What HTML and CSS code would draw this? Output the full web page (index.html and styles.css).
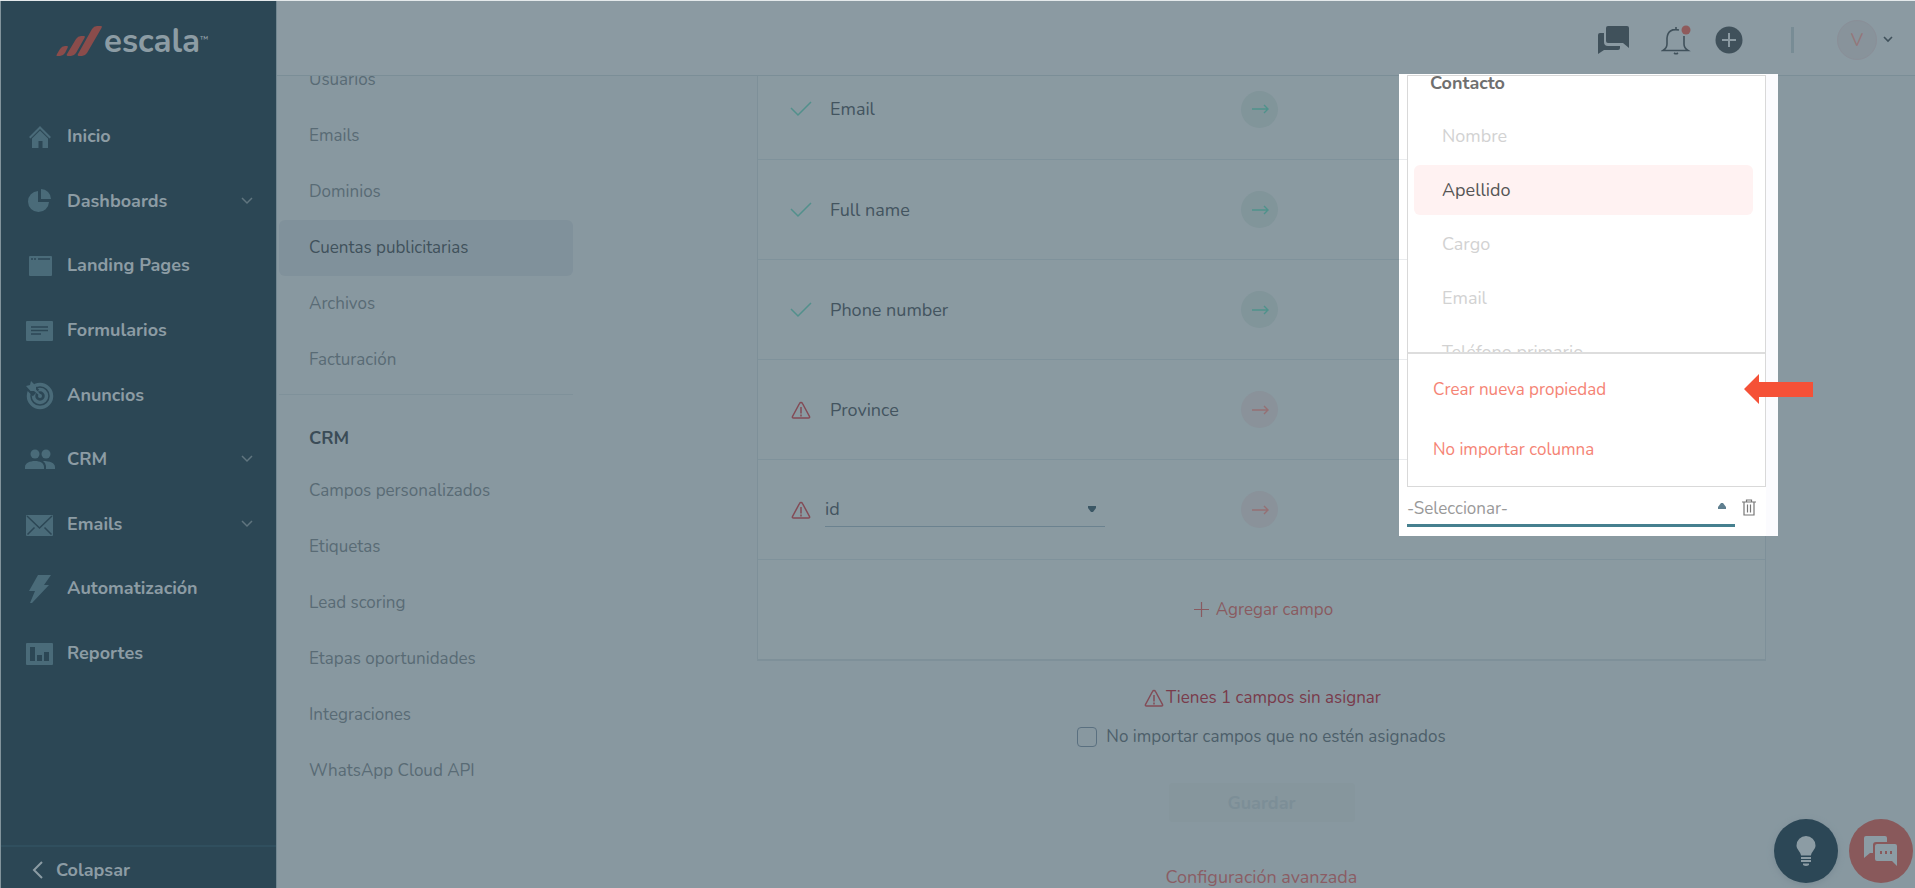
FILE: index.html
```html
<!DOCTYPE html>
<html lang="es">
<head>
<meta charset="utf-8">
<title>Escala – Cuentas publicitarias</title>
<link rel="stylesheet" href="styles.css">
</head>
<body>
<div class="app">
  <aside class="sidebar">
    <a class="logo" href="#" aria-label="Escala">
      <svg class="logo-mark" width="46" height="30" viewBox="0 0 46 30"><path d="M1 30Q0 30 1 28L4 23q2-3 5-3h2q1.500 0 .5 2L9 27q-2 3-5 3zM12 30q-2 0-1-2L20 13q2-3 5-3h3q1.500 0 .5 2L20 27q-2 3-5 3zM23 30q-2 0-1-2L36 3q2-3 5-3h4q1.500 0 .5 2L31 27q-2 3-5 3z"/></svg>
      <span class="logo-word">escala</span><span class="logo-tm">™</span>
    </a>
    <nav class="menu">
      <a class="menu-item" href="#"><svg class="menu-icon" viewBox="0 0 30 30"><path d="M15 5l11 11-1.500 1.500L15 8 5.500 17.500 4 16zM15 9.500l8 8V27h-5.500v-7h-4v7H7v-9.500z"/></svg><span>Inicio</span></a>
      <a class="menu-item" href="#"><svg class="menu-icon" viewBox="0 0 30 30"><path d="M13 5v11h11A10.500 10.500 0 1 1 13 5z"/><path d="M16 3a10 10 0 0 1 10 10H16z"/></svg><span>Dashboards</span><svg class="menu-chevron" viewBox="0 0 12 8"><path d="M1 1l5 5 5-5"/></svg></a>
      <a class="menu-item" href="#"><svg class="menu-icon" viewBox="0 0 30 30"><rect x="4" y="6" width="23" height="20" rx="1"/><path class="cut" d="M6 9h2M9 9h2M13 9h12"/></svg><span>Landing Pages</span></a>
      <a class="menu-item" href="#"><svg class="menu-icon" viewBox="0 0 30 30"><rect x="1" y="6" width="27" height="20" rx="1"/><path class="cut" d="M6 12h17M6 15.500h17M6 19h10"/></svg><span>Formularios</span></a>
      <a class="menu-item" href="#"><svg class="menu-icon" viewBox="0 0 30 30"><circle class="ring" cx="15" cy="16" r="11.500"/><circle class="ring" cx="15" cy="16" r="6.500"/><circle cx="15" cy="16" r="2"/><path class="gap" d="M2 4l9 9"/><path d="M1 6l4-1 1-4 5 5v3.500l5 5.500-1 1-6-5H5.500z"/></svg><span>Anuncios</span></a>
      <a class="menu-item" href="#"><svg class="menu-icon" viewBox="0 0 30 30"><circle cx="10" cy="10" r="4.500"/><circle cx="21" cy="10" r="4.500"/><path d="M0 25v-2c0-4 5-6 10-6s9 2 9 6v2zM21 25v-3q0-3-3-5c7 0 12 2 12 6v2z"/></svg><span>CRM</span><svg class="menu-chevron" viewBox="0 0 12 8"><path d="M1 1l5 5 5-5"/></svg></a>
      <a class="menu-item" href="#"><svg class="menu-icon" viewBox="0 0 30 30"><rect x="1" y="6" width="27" height="21" rx="1"/><path class="cut" d="M2 7l12.500 12L27 7M2.500 25.500l7-7M26.500 25.500l-7-7"/></svg><span>Emails</span><svg class="menu-chevron" viewBox="0 0 12 8"><path d="M1 1l5 5 5-5"/></svg></a>
      <a class="menu-item" href="#"><svg class="menu-icon" viewBox="0 0 30 30"><path d="M13 2h13l-7 10h5L7 30H5l5-12H4z"/></svg><span>Automatización</span></a>
      <a class="menu-item" href="#"><svg class="menu-icon" viewBox="0 0 30 30"><rect x="1" y="5" width="27" height="22" rx="1"/><path class="bars" d="M5 9h5v14H5zM12 17h5v6h-5zM19 14h5v9h-5z"/></svg><span>Reportes</span></a>
    </nav>
    <button class="collapse" type="button"><svg viewBox="0 0 12 18" width="12" height="18"><path d="M10 1L2 9l8 8"/></svg>Colapsar</button>
  </aside>

  <div class="page">
    <header class="topbar">
      <button class="icon-btn" type="button" aria-label="Chat"><svg width="34" height="30" viewBox="0 0 34 30"><path d="M11 1h19q2 0 2 2v20l-6-5H11q-2 0-2-2V3q0-2 2-2zM7 8v9q0 4 4 4h12v2q0 2-2 2H7l-6 4V10q0-2 2-2z"/></svg></button>
      <button class="icon-btn bell" type="button" aria-label="Notificaciones"><svg width="30" height="30" viewBox="0 0 30 30"><path class="line" d="M15 2v3M18 5Q7 3 6 13v6q0 4-4 6.500h25q-4-2.500-4-6.500v-8"/><path class="line" d="M13 28q2 1.500 4 0"/><circle class="dot" cx="25" cy="5" r="4.500"/></svg></button>
      <button class="icon-btn add" type="button" aria-label="Agregar"><svg width="28" height="28" viewBox="0 0 28 28"><circle cx="14" cy="14" r="13.500"/><path class="plus" d="M14 7v14M7 14h14"/></svg></button>
      <span class="separator"></span>
      <button class="account" type="button"><span class="avatar">V</span><svg width="10" height="7" viewBox="0 0 10 7"><path d="M1 1l4 4 4-4"/></svg></button>
    </header>

    <div class="workspace">
      <div class="scroller">
        <nav class="settings">
          <div class="settings-group">
            <a href="#">Usuarios</a>
            <a href="#">Emails</a>
            <a href="#">Dominios</a>
            <a class="current" href="#">Cuentas publicitarias</a>
            <a href="#">Archivos</a>
            <a href="#">Facturación</a>
          </div>
          <div class="settings-group">
            <h2>CRM</h2>
            <a href="#">Campos personalizados</a>
            <a href="#">Etiquetas</a>
            <a href="#">Lead scoring</a>
            <a href="#">Etapas oportunidades</a>
            <a href="#">Integraciones</a>
            <a href="#">WhatsApp Cloud API</a>
          </div>
        </nav>

        <main class="content">
          <div class="card">
            <div class="row"><div class="field"><svg class="check" viewBox="0 0 24 20"><path d="M2 9l7 7L22 3"/></svg><span>Email</span></div><span class="arrow ok"><svg viewBox="0 0 18 10"><path d="M1 5h16M13 1l4 4-4 4"/></svg></span></div>
            <div class="row"><div class="field"><svg class="check" viewBox="0 0 24 20"><path d="M2 9l7 7L22 3"/></svg><span>Full name</span></div><span class="arrow ok"><svg viewBox="0 0 18 10"><path d="M1 5h16M13 1l4 4-4 4"/></svg></span></div>
            <div class="row"><div class="field"><svg class="check" viewBox="0 0 24 20"><path d="M2 9l7 7L22 3"/></svg><span>Phone number</span></div><span class="arrow ok"><svg viewBox="0 0 18 10"><path d="M1 5h16M13 1l4 4-4 4"/></svg></span></div>
            <div class="row"><div class="field"><svg class="warn" viewBox="0 0 24 20"><path d="M12 2.500q1 0 1.500 1l7 13q.5 1.500-1 1.500h-15q-1.500 0-1-1.500l7-13q.5-1 1.500-1zM12 7v6.500M12 14.500v2"/></svg><span>Province</span></div><span class="arrow bad"><svg viewBox="0 0 18 10"><path d="M1 5h16M13 1l4 4-4 4"/></svg></span></div>
            <div class="row"><div class="field"><svg class="warn" viewBox="0 0 24 20"><path d="M12 2.500q1 0 1.500 1l7 13q.5 1.500-1 1.500h-15q-1.500 0-1-1.500l7-13q.5-1 1.500-1zM12 7v6.500M12 14.500v2"/></svg><span class="picker"><select aria-label="Columna"><option>id</option></select><svg viewBox="0 0 10 8"><path d="M1 1h8v2L6 7H4L1 3z"/></svg></span></div><span class="arrow bad"><svg viewBox="0 0 18 10"><path d="M1 5h16M13 1l4 4-4 4"/></svg></span></div>
            <div class="row add-row"><button class="add-field" type="button"><svg width="15" height="15" viewBox="0 0 15 15"><path d="M7.500 0v15M0 7.500h15"/></svg>Agregar campo</button></div>
          </div>
          <p class="notice"><svg class="warn" viewBox="0 0 24 20"><path d="M12 2.500q1 0 1.500 1l7 13q.5 1.500-1 1.500h-15q-1.500 0-1-1.500l7-13q.5-1 1.500-1zM12 7v6.500M12 14.500v2"/></svg>Tienes 1 campos sin asignar</p>
          <label class="skip"><input type="checkbox">No importar campos que no estén asignados</label>
          <button class="save" type="button" disabled>Guardar</button>
          <a class="advanced" href="#">Configuración avanzada</a>
        </main>
      </div>

      <section class="spotlight">
        <div class="panel">
          <div class="options">
            <h3>Contacto</h3>
            <button class="option" type="button">Nombre</button>
            <button class="option active" type="button">Apellido</button>
            <button class="option" type="button">Cargo</button>
            <button class="option" type="button">Email</button>
            <button class="option" type="button">Teléfono primario</button>
          </div>
          <div class="actions">
            <button type="button">Crear nueva propiedad</button>
            <button type="button">No importar columna</button>
          </div>
        </div>
        <div class="target">
          <span class="target-picker"><select aria-label="Propiedad"><option>-Seleccionar-</option></select><svg viewBox="0 0 10 8"><path d="M1 7h8V5L6 1H4L1 5z"/></svg></span>
          <button class="trash" type="button" aria-label="Eliminar"><svg width="14" height="17" viewBox="0 0 14 17"><path d="M0 3h14M4.500 3V1h5v2M2 3v13h10V3M5.500 5.500v8M8.500 5.500v8"/></svg></button>
        </div>
        <svg class="pointer" viewBox="0 0 69 30"><path d="M0 15L15 0v8h54v15H15v7z"/></svg>
      </section>
    </div>
  </div>

  <div class="floaters">
    <button class="fab tips" type="button" aria-label="Consejos"><svg width="22" height="32" viewBox="0 0 22 32"><path d="M11 1a9.500 9.500 0 0 1 9.500 9.500c0 4-4 6-4.500 10H6c-.5-4-4.500-6-4.500-10A9.500 9.500 0 0 1 11 1zM6 22h10v2H6zM6 25h10v2H6zM8 28.500h6V30q-3 2-6 0z"/></svg></button>
    <button class="fab help" type="button" aria-label="Ayuda"><svg width="36" height="32" viewBox="0 0 36 32"><path d="M3 1h19q2 0 2 2v4H13q-3 0-3 3v8H7l-6 5V3q0-2 2-2z"/><path d="M14 9h18q2 0 2 2v20l-5-5H14q-2 0-2-2V11q0-2 2-2z"/><path class="dots" d="M17 16h2v3h-2zM22 16h2v3h-2zM27 16h2v3h-2z"/></svg></button>
  </div>
</div>
</body>
</html>
```
FILE: styles.css
```css
* { box-sizing: border-box; }
body {
  margin: 0;
  font-family: Nunito, Lato, "Open Sans", sans-serif;
  font-size: 17px;
  background: #8898a0;
  overflow: hidden;
}
button, select, input { font: inherit; color: inherit; }
button { border: 0; padding: 0; background: none; }
a { color: inherit; text-decoration: none; }
svg { flex: none; }
h2, h3, p { margin: 0; }

.app { display: flex; height: 100vh; border-top: 1px solid #e4e9eb; }

/* Main menu */
.sidebar {
  flex: none;
  display: flex;
  flex-direction: column;
  width: 277px;
  border-left: 1px solid #82949c;
  border-right: 1px solid #718690;
  background: #2c4755;
  color: #8c9ca4;
}
.logo { display: flex; padding: 25px 0 0 55px; height: 103px; }
.logo-mark { fill: #8a4c4b; }
.logo-word { margin: 2px 0 0 2px; font: 700 33px/28px Nunito, Inter, sans-serif; }
.logo-tm { margin-top: 8px; font-size: 9px; line-height: 10px; }
.menu { flex: 1; display: flex; flex-direction: column; padding-bottom: 160px; }
.menu-item {
  flex: 1;
  display: flex;
  align-items: center;
  gap: 12px;
  padding: 0 23px 0 24px;
  font-size: 18px;
  font-weight: 700;
}
.menu-icon { width: 30px; height: 30px; fill: #4a6b79; }
.menu-icon .cut { fill: none; stroke: #2c4755; stroke-width: 1.5; }
.menu-icon .ring { fill: none; stroke: #4a6b79; stroke-width: 3.5; }
.menu-icon .gap { fill: none; stroke: #2c4755; stroke-width: 9; }
.menu-icon .bars { fill: #2c4755; }
.menu-chevron { width: 12px; height: 8px; margin-left: auto; fill: none; stroke: #60757f; stroke-width: 1.5; }
.collapse {
  display: flex;
  align-items: center;
  gap: 12px;
  height: 43px;
  padding: 5px 0 0 31px;
  border-top: 2px solid #304f5e;
  font-size: 18px;
  font-weight: 700;
}
.collapse svg { fill: none; stroke: #8c9ca4; stroke-width: 2; }

/* Top bar */
.page { flex: 1; min-width: 0; display: flex; flex-direction: column; }
.topbar {
  flex: none;
  display: flex;
  align-items: center;
  justify-content: flex-end;
  height: 75px;
  padding: 3px 22px 0 0;
  border-bottom: 1px solid #7b8e97;
  background: #8b9aa2;
  color: #40515b;
}
.icon-btn { display: flex; fill: #40515b; }
.bell { margin-left: 30px; }
.bell .line { fill: none; stroke: #40515b; stroke-width: 1.6; }
.bell .dot { fill: #8f5b5c; }
.add { margin-left: 24px; }
.add .plus { stroke: #8b9aa2; stroke-width: 2; }
.separator { width: 3px; height: 26px; margin: 0 43px 0 48px; background: #788c95; }
.account { display: flex; align-items: center; gap: 6px; }
.account svg { fill: none; stroke: #40515b; stroke-width: 1.6; }
.avatar {
  width: 40px;
  border: 1px solid #8a8f98;
  border-radius: 50%;
  background: #88939b;
  color: #95777a;
  font-size: 18px;
  line-height: 38px;
}

/* Settings navigation */
.workspace { flex: 1; min-height: 0; position: relative; }
.scroller { display: flex; height: 100%; overflow: hidden; }
.settings { flex: none; width: 300px; margin-top: -24px; padding: 0 4px 0 2px; color: #596b75; }
.settings-group { display: flex; flex-direction: column; padding-bottom: 6px; }
.settings-group + .settings-group { border-top: 1px solid #7f919a; }
.settings-group a { padding: 0 30px; line-height: 56px; }
.settings-group .current { border-radius: 6px; background: #80919b; color: #40515c; }
.settings-group h2 { padding: 18px 30px 0; font-size: 18px; line-height: 50px; color: #3b4c57; }

/* Field mapping */
.content {
  flex: 1;
  display: flex;
  flex-direction: column;
  align-items: center;
  margin-top: -17px;
  padding: 0 149px 0 180px;
  color: #43545f;
}
.card {
  align-self: stretch;
  border: solid #7e9099;
  border-width: 0 1px 2px;
  background: #8a9aa1;
}
.row {
  display: grid;
  grid-template-columns: 1fr 37px 1fr;
  align-items: center;
  height: 100px;
  padding: 0 4px 0 0;
}
.row + .row { border-top: 1px solid #7f929b; }
.field { display: flex; align-items: center; gap: 17px; padding-left: 31px; font-size: 18px; }
.check, .warn { width: 24px; height: 20px; fill: none; stroke-width: 1.5; }
.check { stroke: #52908c; }
.warn { stroke: #834b56; }
.arrow { display: flex; justify-content: center; align-items: center; height: 37px; border-radius: 50%; }
.arrow svg { width: 18px; height: 10px; fill: none; stroke-width: 1.4; }
.ok { background: #81959a; stroke: #4f928c; }
.bad { background: #8a929a; stroke: #957074; }
.picker { display: grid; align-items: center; width: 280px; height: 34px; margin-left: -5px; border-bottom: 1px solid #6b828f; }
.picker > *, .target-picker > * { grid-area: 1 / 1; }
select { appearance: none; width: 100%; border: 0; padding: 0; background: none; }
.picker svg, .target-picker svg { justify-self: end; width: 10px; height: 8px; margin-right: 8px; fill: #3b5765; pointer-events: none; }
.add-row { display: flex; justify-content: center; padding-left: 8px; }
.add-field { display: flex; align-items: center; gap: 7px; color: #895a60; }
.add-field svg { fill: none; stroke: #895a60; stroke-width: 1.2; }
.notice { display: flex; align-items: center; margin-top: 26px; line-height: 22px; color: #793b4b; }
.skip { display: flex; align-items: center; gap: 9px; margin-top: 17px; line-height: 22px; color: #4d5f6a; }
.skip input { appearance: none; width: 20px; height: 20px; margin: 0; border: 1px solid #5a7080; border-radius: 4px; }
.save {
  width: 186px;
  height: 43px;
  margin-top: 35px;
  border-radius: 4px;
  background: #86969d;
  color: #7c8e97;
  font-size: 18px;
  font-weight: 700;
}
.advanced { margin-top: 44px; font-size: 18px; line-height: 22px; color: #8b5d64; }

/* Highlighted property menu */
.spotlight {
  position: absolute;
  top: -2px;
  right: 137px;
  width: 379px;
  height: 462px;
  padding: 1px 12px 0 8px;
  background:
    linear-gradient(#fbfbfe, #fbfbfe) right / 12px 100% no-repeat,
    repeating-linear-gradient(#fff 0 99px, #e9ebed 99px 100px) 0 -14px / 8px 700px no-repeat,
    #fff;
}
.panel { border: 1px solid #d9d9d9; background: #fff; }
.options { display: flex; flex-direction: column; height: 276px; padding: 0 12px 0 6px; overflow: hidden; }
.options h3 { margin-bottom: 20px; padding-left: 16px; font-size: 18px; line-height: 15px; color: #6f6f6f; }
.option {
  flex: none;
  height: 50px;
  margin-bottom: 4px;
  padding-left: 28px;
  border-radius: 6px;
  text-align: left;
  font-size: 18px;
  color: #d2d2d2;
}
.option.active { background: #fff2f2; color: #555; }
.actions { display: flex; flex-direction: column; padding: 5px 0 7px; border-top: 2px solid #ddd; color: #f58475; }
.actions button { height: 60px; padding-left: 25px; text-align: left; }
.target { display: flex; align-items: center; gap: 7px; }
.target-picker { display: grid; align-items: center; width: 328px; height: 40px; border-bottom: 3px solid #46808f; color: #999; }
.target-picker select { padding-top: 5px; }
.target-picker svg { fill: #5f7f8f; }
.trash { display: flex; }
.trash svg { fill: none; stroke: #777; stroke-width: 1.2; }
.pointer { position: absolute; top: 300px; right: -35px; width: 69px; height: 30px; fill: #f55137; }

/* Floating buttons */
.floaters { position: absolute; right: 2px; bottom: 5px; display: flex; gap: 11px; }
.fab { display: flex; justify-content: center; align-items: center; width: 64px; height: 64px; border-radius: 50%; fill: #8c9ca4; }
.tips { background: #2c4756; box-shadow: 0 2px 6px #7a8b94; }
.help { background: #89595b; }
.help .dots { fill: #89595b; }
```
